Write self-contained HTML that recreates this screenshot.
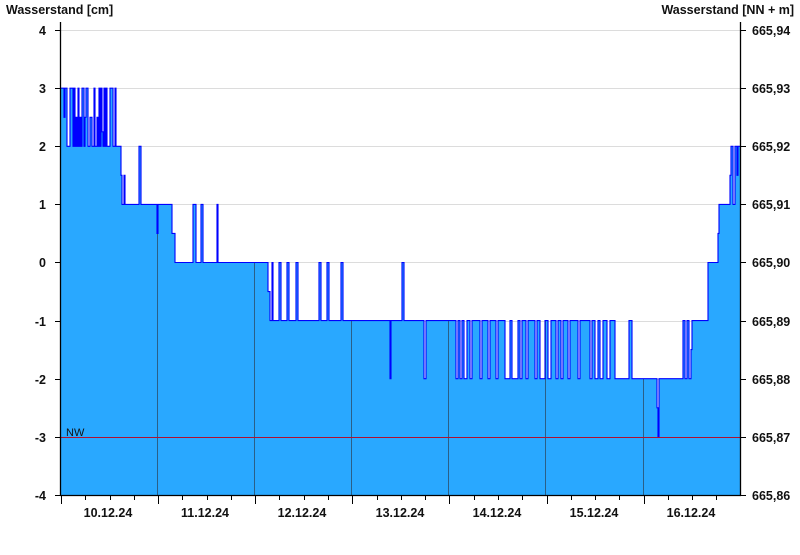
<!DOCTYPE html>
<html><head><meta charset="utf-8"><style>
body{margin:0;background:#fff;width:800px;height:550px;overflow:hidden;font-family:"Liberation Sans",Arial,sans-serif}
svg text{font-family:"Liberation Sans",Arial,sans-serif;font-weight:bold;font-size:12.5px;fill:#111}
</style></head><body>
<svg id="s" width="800" height="550" xmlns="http://www.w3.org/2000/svg">
<text x="6" y="14">Wasserstand [cm]</text>
<text x="794" y="14" text-anchor="end">Wasserstand [NN + m]</text>
<g stroke="#dcdcdc" stroke-width="1">
<line x1="61" y1="30.5" x2="740" y2="30.5"/><line x1="61" y1="88.5" x2="740" y2="88.5"/><line x1="61" y1="146.5" x2="740" y2="146.5"/><line x1="61" y1="204.5" x2="740" y2="204.5"/><line x1="61" y1="262.5" x2="740" y2="262.5"/><line x1="61" y1="321.5" x2="740" y2="321.5"/><line x1="61" y1="379.5" x2="740" y2="379.5"/>
</g>
<g id="data"></g>
<line x1="61" y1="437.5" x2="740" y2="437.5" stroke="#b01030" stroke-width="1"/>
<text x="66" y="436" style="font-weight:normal;font-size:11px">NW</text>
<g stroke="#000" stroke-width="1.3">
<line x1="60.5" y1="22" x2="60.5" y2="496"/><line x1="740.5" y1="22" x2="740.5" y2="496"/>
<line x1="60" y1="495.5" x2="741" y2="495.5"/>
</g>
<g id="ticks" stroke="#000" stroke-width="1"></g>
<g text-anchor="end">
<text x="46" y="35">4</text><text x="46" y="93">3</text><text x="46" y="151">2</text><text x="46" y="209">1</text><text x="46" y="267">0</text><text x="46" y="326">-1</text><text x="46" y="384">-2</text><text x="46" y="442">-3</text><text x="46" y="500">-4</text>
</g>
<g>
<text x="752" y="35">665,94</text><text x="752" y="93">665,93</text><text x="752" y="151">665,92</text><text x="752" y="209">665,91</text><text x="752" y="267">665,90</text><text x="752" y="326">665,89</text><text x="752" y="384">665,88</text><text x="752" y="442">665,87</text><text x="752" y="500">665,86</text>
</g>
<g text-anchor="middle">
<text x="108" y="517">10.12.24</text><text x="205" y="517">11.12.24</text><text x="302" y="517">12.12.24</text><text x="400" y="517">13.12.24</text><text x="497" y="517">14.12.24</text><text x="594" y="517">15.12.24</text><text x="691" y="517">16.12.24</text>
</g>
</svg>
<script>
var d=[61,3,64,2.5,65,3,67,2,70,3,73,2,74,3,75,2,76,2.5,77,2,78,3,79,2,80,2.5,81,2,82,3,84,2,85,2.5,86,3,88,2,90,2.5,92,2,94,3,95,2,97,2.5,98,2,99,3,100,2,101,3,102,2.25,103,2,104,3,105,2,106,3,107,2,110,3,113,2,115,3,116,2,120,2,121,1.5,122,1,124,1.5,125,1,139,2,141,1,157,0.5,158,1,172,0.5,175,0,193,1,196,0,201,1,203,0,217,1,218,0,
268,-0.5,270,-1,272,0,273,-1,279,0,281,-1,287,0,289,-1,296,0,298,-1,319,0,321,-1,327,0,329,-1,341,0,343,-1,390,-2,391,-1,402,0,404,-1,424,-2,426,-1,455,-2,456,-1,458,-2,460,-1,462,-2,464,-1,467,-2,470,-1,472,-2,480,-1,482,-2,488,-1,490,-2,496,-1,498,-2,505,-1,510,-2,512,-1,518,-2,520,-1,522,-2,526,-1,528,-2,535,-1,537,-2,540,-1,545,-2,548,-1,551,-2,556,-1,558,-2,561,-1,563,-2,568,-1,570,-2,578,-1,580,-2,590,-1,592,-2,595,-1,598,-2,600,-1,603,-2,607,-1,610,-2,615,-1,617,-2,629,-1,632,-2,657,-2.5,658,-3,659,-2,683,-1,685,-2,687,-1,689,-2,691,-1.5,692,-1,708,0,718,0.5,719,1,730,1.5,731,2,733,1,735,2,737,1.5,738,2,740,2];
for(var i=0;i<d.length;i+=2){if(d[i]>=455&&d[i]<=615){if(d[i+1]==-1)d[i+1]=-2;else if(d[i+1]==-2)d[i+1]=-1;}}
function Y(v){return (262.5-v*58.1).toFixed(1)}
var p="M"+d[0]+","+Y(d[1]);
for(var i=2;i<d.length;i+=2){p+="H"+d[i]+"V"+Y(d[i+1]);}
var g=document.getElementById("data");
g.innerHTML='<defs><clipPath id="c"><path d="'+p+'V495H61Z"/></clipPath></defs>'+
'<path d="'+p+'V495H61Z" fill="#29a8ff"/>'+
'<g clip-path="url(#c)" stroke="#2a5f87" stroke-width="1">'+[157,254,351,448,545,643].map(function(x){return '<line x1="'+(x+.5)+'" y1="20" x2="'+(x+.5)+'" y2="495"/>'}).join("")+'</g>'+
'<path d="'+p+'" fill="none" stroke="#0000ff" stroke-width="1.1"/>';
var t="";
t+=[30.5,88.5,146.5,204.5,262.5,321.5,379.5,437.5,495.5].map(function(y){return '<line x1="55" y1="'+y+'" x2="60" y2="'+y+'"/><line x1="741" y1="'+y+'" x2="746" y2="'+y+'"/>'}).join("");
for(var k=0;k<28;k++){var x=Math.round(61+k*97.1/4)+.5;var L=(k%4==0)?8:4;t+='<line x1="'+x+'" y1="496" x2="'+x+'" y2="'+(496+L)+'"/>';}
document.getElementById("ticks").innerHTML=t;
</script>
</body></html>
